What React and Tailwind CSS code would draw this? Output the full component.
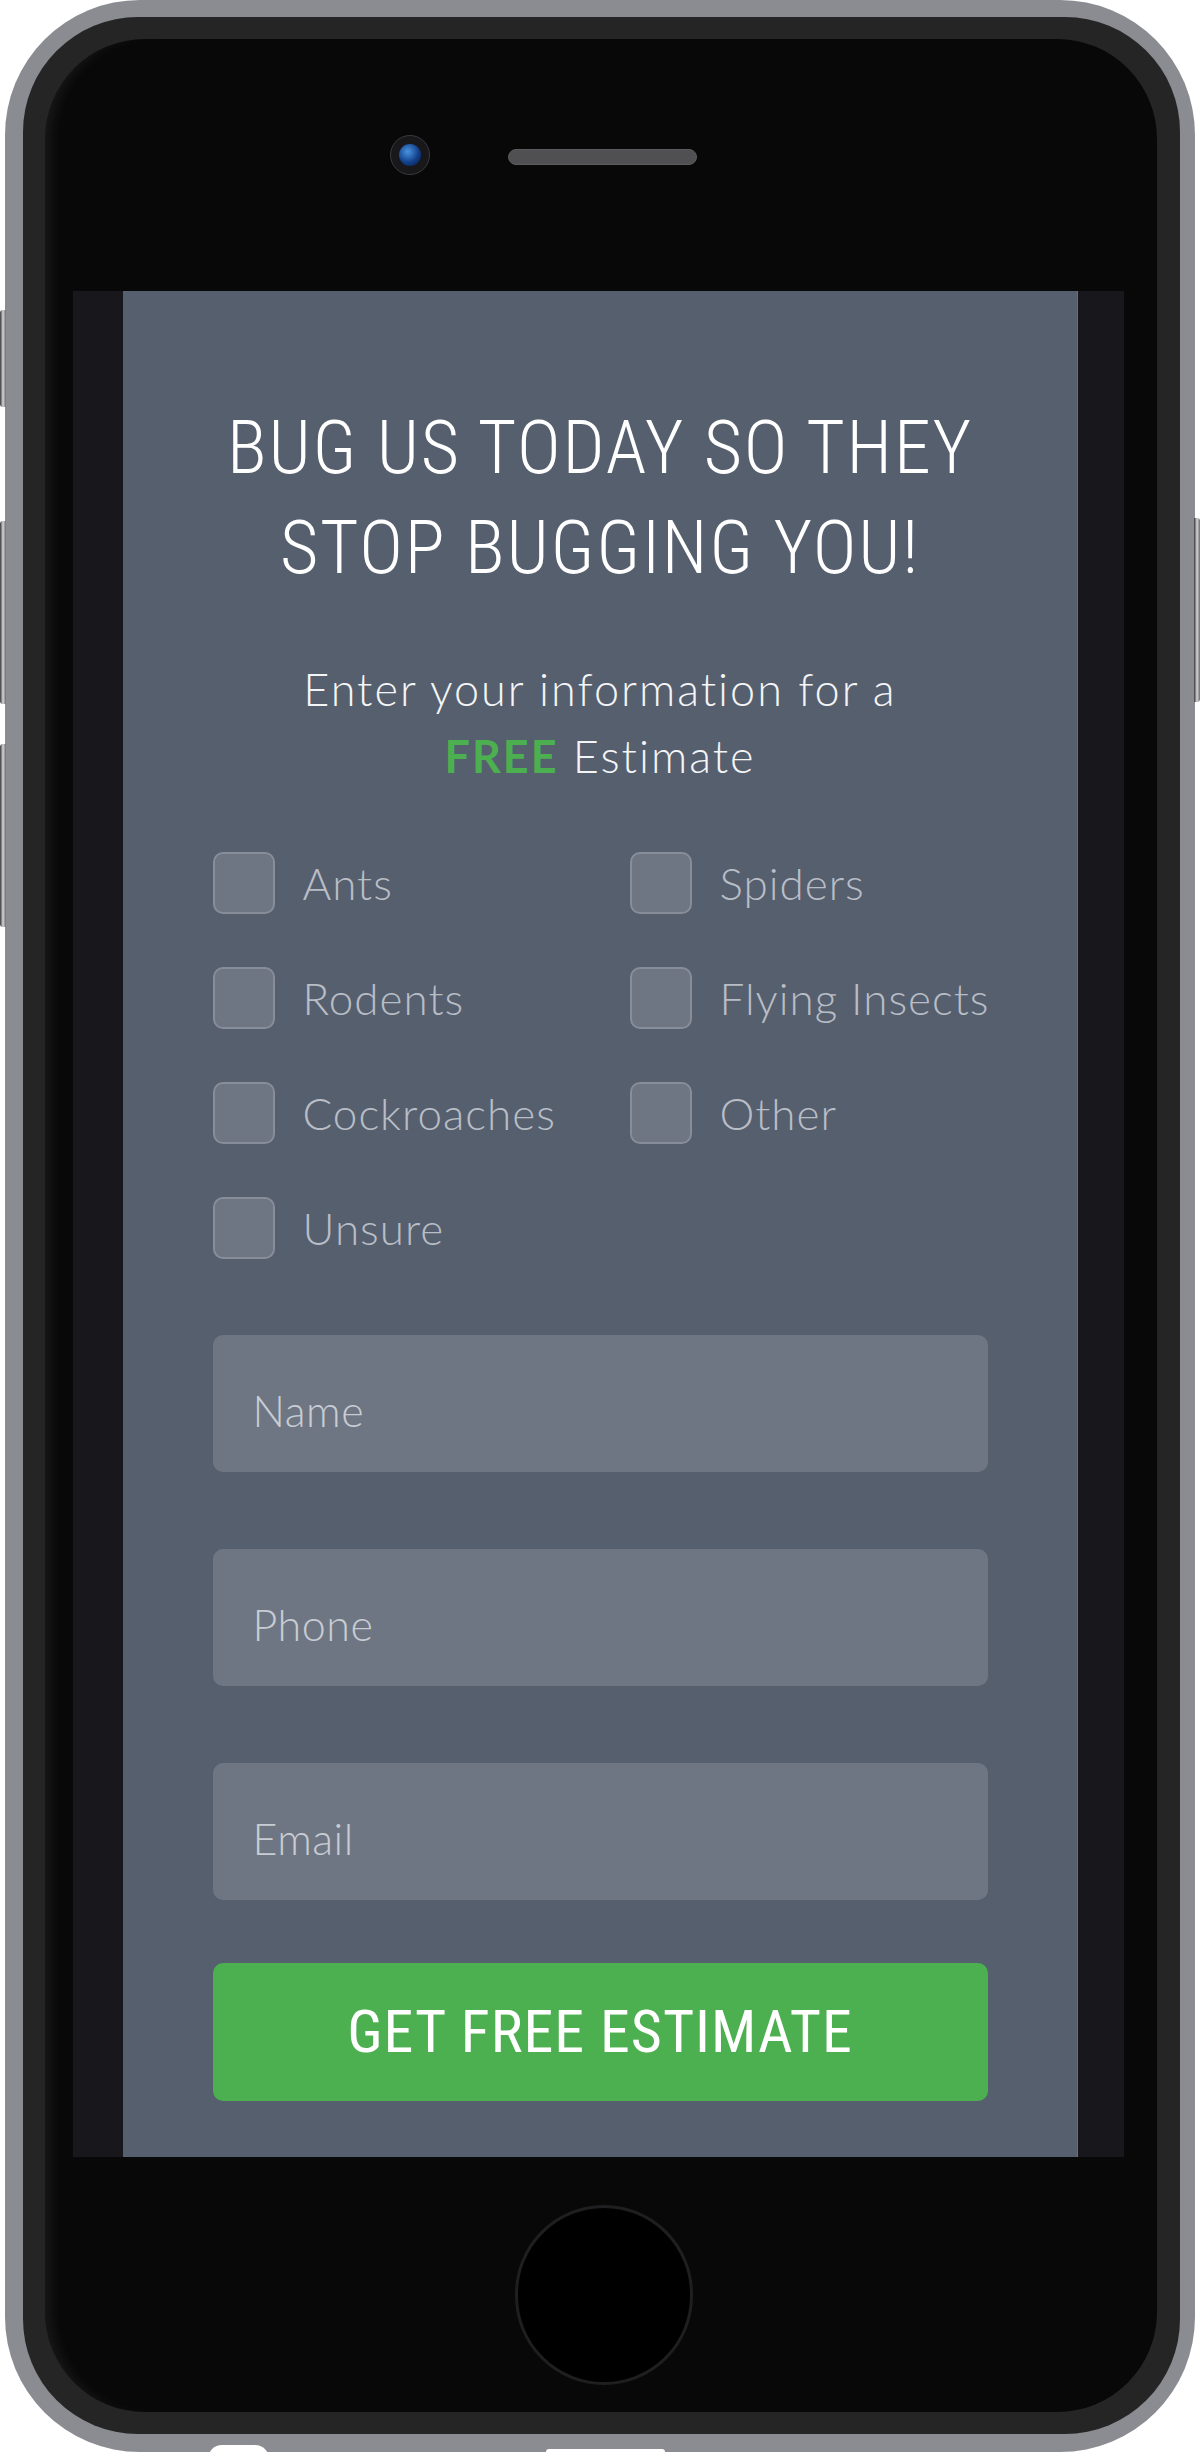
import React from 'react';

const PESTS = ['Ants', 'Spiders', 'Rodents', 'Flying Insects', 'Cockroaches', 'Other', 'Unsure'];

const FIELDS = ['Name', 'Phone', 'Email'];

function SideButton({ className }) {
    return (
        <div className={`absolute w-[6px] bg-gradient-to-r from-[#3a3a3c] via-[#d8d8da] to-[#6b6b6e] ${className}`} />
    );
}

function PestOption({ label }) {
    return (
        <label className="flex items-center gap-[28px] h-[62px]">
            <input
                type="checkbox"
                className="appearance-none shrink-0 w-[62px] h-[62px] rounded-[10px] bg-[#6e7583] border-2 border-[#878d99]"
            />
            <span className="text-[44px] font-light tracking-[1px] text-[#b8bdc6] whitespace-nowrap">{label}</span>
        </label>
    );
}

export default function App() {
    return (
        <div className="relative w-[1200px] h-[2452px] bg-white overflow-hidden font-['Lato',sans-serif]">
            {/* hardware buttons */}
            <SideButton className="left-0 top-[310px] h-[97px] rounded-l-[3px]" />
            <SideButton className="left-0 top-[521px] h-[183px] rounded-l-[3px]" />
            <SideButton className="left-0 top-[744px] h-[183px] rounded-l-[3px]" />
            <SideButton className="right-0 top-[518px] h-[184px] rounded-r-[3px]" />

            <div className="mx-[5px] h-full rounded-[135px] bg-[#8b8c91] pt-[17px] pb-[18px] pl-[18px] pr-[15px]">
                <div className="h-full rounded-[115px] bg-[#252525] pt-[22px] pb-[22px] pl-[22px] pr-[23px]">
                    <div className="h-full rounded-[100px] bg-[#080808] flex flex-col shadow-[inset_14px_0_14px_-8px_rgba(255,255,255,0.07)]">
                        {/* earpiece + camera */}
                        <div className="h-[252px] flex items-center pl-[345px] pb-[20px]">
                            <div className="w-[40px] h-[40px] rounded-full bg-[#18181b] border border-[#3a3a3e] flex items-center justify-center">
                                <div className="w-[22px] h-[22px] rounded-full bg-[radial-gradient(circle_at_40%_35%,#4a94e0,#12408a_55%,#061a3a)]" />
                            </div>
                            <div className="ml-[78px] mt-[4px] w-[189px] h-[16px] rounded-full bg-[#505052] border border-[#5c5c5e]" />
                        </div>

                        {/* screen */}
                        <div className="ml-[28px] w-[1051px] h-[1866px] bg-[#17171c] pl-[50px]">
                            <div className="w-[955px] h-full bg-[#565f6e] border-r border-[#687080] flex flex-col items-center pt-[107px]">
                                <h1 className="font-['Roboto_Condensed','Liberation_Sans_Narrow','DejaVu_Sans_Condensed',sans-serif] font-light text-white text-[74px] leading-[100px] tracking-[1.8px] text-center">
                                    BUG US TODAY SO THEY
                                    <br />
                                    STOP BUGGING YOU!
                                </h1>

                                <p className="mt-[58px] text-[45px] leading-[67px] font-light tracking-[2px] text-[#f4f5f7] text-center">
                                    Enter your information for a
                                    <br />
                                    <span className="font-bold text-[#4caf50]">FREE</span> Estimate
                                </p>

                                <form className="mt-[62px] w-[775px] flex flex-col">
                                    <div className="grid grid-cols-[417px_1fr] gap-y-[53px]">
                                        {PESTS.map((p) => (
                                            <PestOption key={p} label={p} />
                                        ))}
                                    </div>

                                    <div className="mt-[76px] flex flex-col gap-[77px]">
                                        {FIELDS.map((f) => (
                                            <input
                                                key={f}
                                                type="text"
                                                placeholder={f}
                                                className="h-[137px] w-full rounded-[10px] bg-[#6f7683] px-[40px] pt-[14px] text-[43px] font-light tracking-[0.5px] text-white placeholder:text-[#c8ccd3] outline-none"
                                            />
                                        ))}
                                    </div>

                                    <button
                                        type="button"
                                        className="mt-[63px] h-[138px] w-full rounded-[10px] bg-[#4caf50] text-white font-['Roboto_Condensed','Liberation_Sans_Narrow','DejaVu_Sans_Condensed',sans-serif] text-[60px] tracking-[1px]"
                                    >
                                        GET FREE ESTIMATE
                                    </button>
                                </form>
                            </div>
                        </div>

                        {/* home button */}
                        <div className="flex-1 flex items-start pt-[48px] pl-[470px]">
                            <div className="w-[178px] h-[180px] rounded-full bg-black border-[3px] border-[#1f1f21]" />
                        </div>
                    </div>
                </div>
            </div>

            {/* bottom port cut-outs */}
            <div className="absolute left-[208px] top-[2445px] w-[61px] h-[14px] rounded-t-full bg-white" />
            <div className="absolute left-[546px] top-[2449px] w-[119px] h-[6px] rounded-t-[3px] bg-white" />
        </div>
    );
}
